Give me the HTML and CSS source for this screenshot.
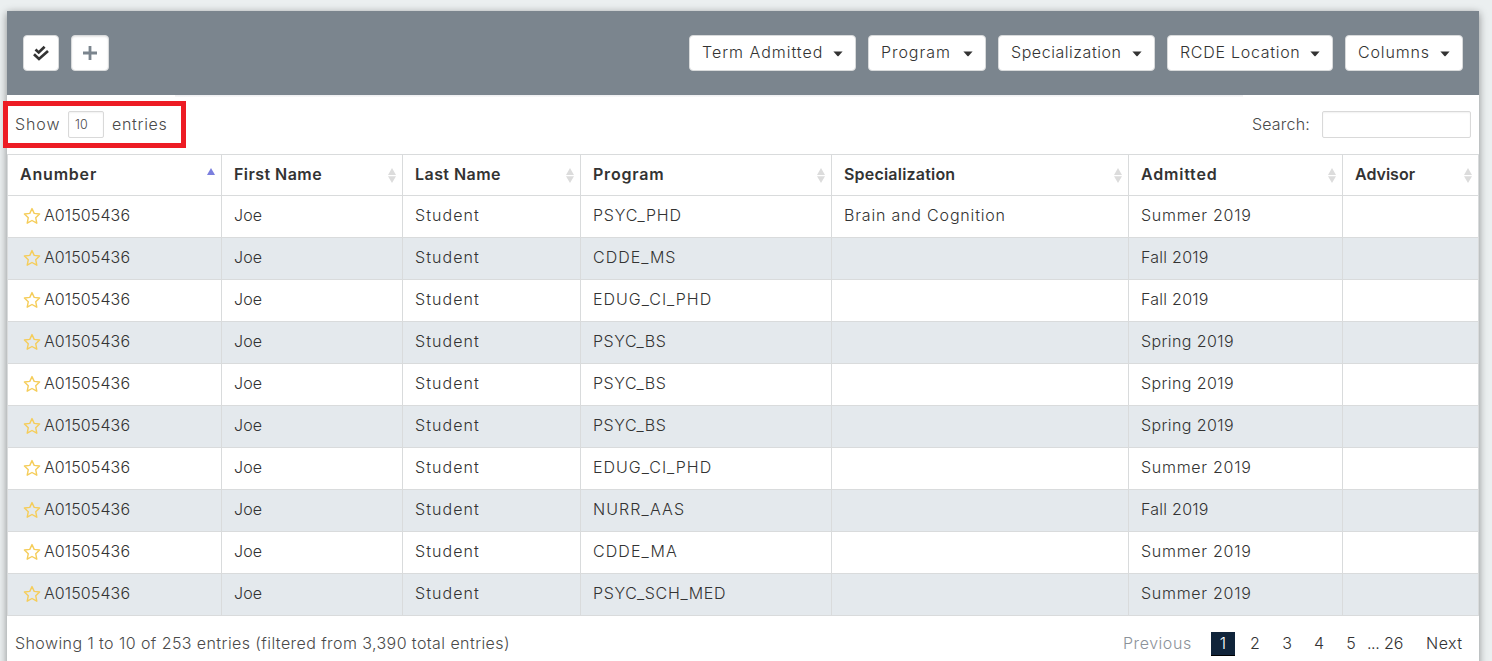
FILE: index.html
```html
<!DOCTYPE html>
<html lang="en">
<head>
<meta charset="utf-8">
<title>Students</title>
<link rel="stylesheet" href="styles.css">
</head>
<body>
<svg class="defs" width="0" height="0" aria-hidden="true">
  <symbol id="star" viewBox="0 0 18 18"><path d="M9 1.6 11.2 6.4 16.6 7 12.7 10.7 13.8 16.2 9 13.5 4.2 16.2 5.3 10.7 1.4 7 6.8 6.4Z" fill="none" stroke="#f5cd5a" stroke-width="1.4" stroke-linejoin="round"/></symbol>
  <symbol id="sort" viewBox="0 0 8 15"><path d="M4 0 8 7H0ZM0 8.2H8L4 15Z" fill="#dcdcdc"/></symbol>
  <symbol id="caret" viewBox="0 0 10 6"><path d="M.4 .4H9.6L5.6 5Q5 5.6 4.4 5Z" fill="#333"/></symbol>
</svg>
<main class="card">
  <header class="toolbar">
    <button class="btn btn-check" aria-label="Select all"><svg width="18" height="17" viewBox="0 0 18 17"><path d="M3.5 4.6 6.7 7.4 12.6 1.8M2 9.2 7 14 16 6" fill="none" stroke="#333" stroke-width="2.7"/></svg></button>
    <button class="btn btn-plus" aria-label="Add"><svg width="14" height="14" viewBox="0 0 14 14"><path d="M7 0V14M0 7H14" stroke="#7b858e" stroke-width="2.8"/></svg></button>
    <div class="filters">
      <button class="btn w-term"><span>Term Admitted</span><svg class="caret"><use href="#caret"/></svg></button>
      <button class="btn w-prog"><span>Program</span><svg class="caret"><use href="#caret"/></svg></button>
      <button class="btn w-spec"><span>Specialization</span><svg class="caret"><use href="#caret"/></svg></button>
      <button class="btn w-loc"><span>RCDE Location</span><svg class="caret"><use href="#caret"/></svg></button>
      <button class="btn w-cols"><span>Columns</span><svg class="caret"><use href="#caret"/></svg></button>
    </div>
  </header>
  <section class="controls">
    <label class="length"><span class="show">Show</span><span class="box count">10</span><span class="entries">entries</span></label>
    <label class="search"><span class="caption">Search:</span><span class="box query"></span></label>
  </section>
  <table class="students">
    <colgroup><col class="c1"><col class="c2"><col class="c3"><col class="c4"><col class="c5"><col class="c6"><col class="c7"></colgroup>
    <thead><tr>
      <th><div class="head"><span class="wide">Anumber</span><svg class="asc" viewBox="0 0 8 7"><path d="M4 0 8 7H0Z" fill="#7b7fde"/></svg></div></th>
      <th><div class="head"><span class="medium">First Name</span><svg class="sort"><use href="#sort"/></svg></div></th>
      <th><div class="head"><span class="medium">Last Name</span><svg class="sort"><use href="#sort"/></svg></div></th>
      <th><div class="head"><span class="wide">Program</span><svg class="sort"><use href="#sort"/></svg></div></th>
      <th><div class="head"><span class="narrow">Specialization</span><svg class="sort"><use href="#sort"/></svg></div></th>
      <th><div class="head"><span class="wide">Admitted</span><svg class="sort"><use href="#sort"/></svg></div></th>
      <th><div class="head"><span>Advisor</span><svg class="sort"><use href="#sort"/></svg></div></th>
    </tr></thead>
    <tbody>
      <tr><td><div class="id"><svg class="star"><use href="#star"/></svg><span>A01505436</span></div></td><td class="first">Joe</td><td class="last">Student</td><td class="prog">PSYC_PHD</td><td class="spec">Brain and Cognition</td><td class="term summer">Summer 2019</td><td></td></tr>
      <tr><td><div class="id"><svg class="star"><use href="#star"/></svg><span>A01505436</span></div></td><td class="first">Joe</td><td class="last">Student</td><td class="prog ms">CDDE_MS</td><td></td><td class="term fall">Fall 2019</td><td></td></tr>
      <tr><td><div class="id"><svg class="star"><use href="#star"/></svg><span>A01505436</span></div></td><td class="first">Joe</td><td class="last">Student</td><td class="prog ms">EDUG_CI_PHD</td><td></td><td class="term fall">Fall 2019</td><td></td></tr>
      <tr><td><div class="id"><svg class="star"><use href="#star"/></svg><span>A01505436</span></div></td><td class="first">Joe</td><td class="last">Student</td><td class="prog bs">PSYC_BS</td><td></td><td class="term spring">Spring 2019</td><td></td></tr>
      <tr><td><div class="id"><svg class="star"><use href="#star"/></svg><span>A01505436</span></div></td><td class="first">Joe</td><td class="last">Student</td><td class="prog bs">PSYC_BS</td><td></td><td class="term spring">Spring 2019</td><td></td></tr>
      <tr><td><div class="id"><svg class="star"><use href="#star"/></svg><span>A01505436</span></div></td><td class="first">Joe</td><td class="last">Student</td><td class="prog bs">PSYC_BS</td><td></td><td class="term spring">Spring 2019</td><td></td></tr>
      <tr><td><div class="id"><svg class="star"><use href="#star"/></svg><span>A01505436</span></div></td><td class="first">Joe</td><td class="last">Student</td><td class="prog ms">EDUG_CI_PHD</td><td></td><td class="term summer">Summer 2019</td><td></td></tr>
      <tr><td><div class="id"><svg class="star"><use href="#star"/></svg><span>A01505436</span></div></td><td class="first">Joe</td><td class="last">Student</td><td class="prog ma">NURR_AAS</td><td></td><td class="term fall">Fall 2019</td><td></td></tr>
      <tr><td><div class="id"><svg class="star"><use href="#star"/></svg><span>A01505436</span></div></td><td class="first">Joe</td><td class="last">Student</td><td class="prog ma">CDDE_MA</td><td></td><td class="term summer">Summer 2019</td><td></td></tr>
      <tr><td><div class="id"><svg class="star"><use href="#star"/></svg><span>A01505436</span></div></td><td class="first">Joe</td><td class="last">Student</td><td class="prog med">PSYC_SCH_MED</td><td></td><td class="term summer">Summer 2019</td><td></td></tr>
    </tbody>
  </table>
  <footer class="footer">
    <span class="info">Showing 1 to 10 of 253 entries (filtered from 3,390 total entries)</span>
    <nav class="pages"><span class="prev">Previous</span><span class="page current">1</span><span class="page">2</span><span class="page">3</span><span class="page">4</span><span class="page page-five">5</span><span class="dots">...</span><span class="last-page">26</span><span class="next">Next</span></nav>
  </footer>
  <div class="highlight"></div>
</main>
</body>
</html>
```
FILE: styles.css
```css
* { box-sizing: border-box; }
body {
  margin: 0;
  height: 661px;
  overflow: hidden;
  padding: 11px 13px 0 7px;
  background: #ebeff0;
  color: #333;
  font: 300 16px/22px Inter, "Open Sans", sans-serif;
}
.defs { display: block; position: absolute; }
svg { display: block; flex: none; }
.card {
  position: relative;
  height: 680px;
  background: #fff;
  box-shadow: 0 2px 8px rgba(0, 0, 0, .42);
}
.toolbar {
  position: relative;
  display: flex;
  align-items: center;
  height: 84px;
  padding: 0 16px;
  background: #7b858e;
}
.toolbar::after {
  content: "";
  position: absolute;
  left: 168px;
  right: 236px;
  top: 100%;
  height: 2px;
  background: linear-gradient(#ededf0, #fafafa);
}
.btn {
  display: flex;
  align-items: center;
  justify-content: center;
  height: 36px;
  padding: 0;
  border: 1px solid #d8dadb;
  border-radius: 4px;
  background: #fff;
  color: #333;
  font: inherit;
  white-space: nowrap;
}
.btn-check { width: 36px; }
.btn-plus { width: 38px; margin-left: 12px; box-shadow: inset 0 1px 2px rgba(0, 0, 0, .1); }
.filters { display: flex; gap: 12px; margin-left: auto; }
.filters .btn { justify-content: space-between; padding: 0 12px 2px; }
.caret { width: 10px; height: 6px; margin-top: 4px; }
.w-term { width: 167px; letter-spacing: .98px; }
.w-prog { width: 118px; letter-spacing: .95px; }
.w-spec { width: 157px; letter-spacing: .55px; }
.w-loc { width: 166px; letter-spacing: .72px; }
.w-cols { width: 118px; letter-spacing: .85px; }
.controls {
  display: flex;
  align-items: center;
  justify-content: space-between;
  height: 59px;
  padding: 0 8px;
  color: #4a4a4a;
}
.length, .search { display: flex; align-items: center; }
.show { width: 53px; padding-bottom: 2px; letter-spacing: .9px; }
.entries { padding-bottom: 2px; letter-spacing: .7px; }
.caption { padding-bottom: 2px; letter-spacing: .2px; }
.box { height: 27px; border: 1px solid #d9d9d9; border-radius: 2px; box-shadow: inset 0 1px 2px rgba(0, 0, 0, .06); }
.count { width: 36px; margin-right: 8px; padding-left: 6px; font-size: 12.5px; line-height: 25px; }
.query { width: 149px; margin-left: 12px; }
.students {
  width: 1472px;
  table-layout: fixed;
  border-collapse: separate;
  border-spacing: 0;
  border: solid #d9dbdc;
  border-width: 1px 0 0 1px;
}
.c1 { width: 214px; }
.c2 { width: 181px; }
.c3 { width: 178px; }
.c4 { width: 251px; }
.c5 { width: 297px; }
.c6 { width: 214px; }
.c7 { width: 136px; }
th, td {
  height: 42px;
  padding: 0 12px 4px;
  border: solid #d9dbdc;
  border-width: 0 1px 1px 0;
  text-align: left;
  white-space: nowrap;
}
th { height: 41px; padding: 0 6px 3px 12px; font-weight: 600; }
tbody tr:nth-child(even) { background: #e4e9ed; }
.head { display: flex; align-items: center; justify-content: space-between; }
.wide { letter-spacing: .8px; }
.medium { letter-spacing: .45px; }
.narrow { letter-spacing: .2px; }
.sort { width: 8px; height: 15px; margin-top: 4px; }
.asc { width: 8px; height: 7px; margin-bottom: 4px; }
.id { display: flex; align-items: center; padding-left: 3px; letter-spacing: .1px; }
.star { width: 18px; height: 18px; margin: 3px 3px 0 0; }
.first { letter-spacing: .1px; }
.last { letter-spacing: 1.05px; }
.prog { letter-spacing: .8px; }
.ms { letter-spacing: 1px; }
.bs { letter-spacing: .55px; }
.ma { letter-spacing: 1.1px; }
.med { letter-spacing: .67px; }
.spec { letter-spacing: .82px; }
.summer { letter-spacing: .72px; }
.fall { letter-spacing: .25px; }
.spring { letter-spacing: .4px; }
.footer {
  display: flex;
  justify-content: space-between;
  padding: 16px 8px 0;
  color: #4a4a4a;
}
.info { letter-spacing: .42px; }
.pages { display: flex; color: #333; }
.prev { width: 88px; color: #8c9299; letter-spacing: .55px; }
.page { width: 24px; margin-right: 8px; text-align: center; }
.page-five { margin-right: 4px; }
.current { height: 24px; background: #10243a; border-bottom: 1px solid #000; color: #fff; }
.dots { width: 17px; letter-spacing: -.4px; }
.last-page { width: 42px; }
.next { width: 45px; letter-spacing: .5px; }
.highlight {
  position: absolute;
  left: -4px;
  top: 90px;
  width: 183px;
  height: 47px;
  border: 5px solid #ed1c24;
}
```
